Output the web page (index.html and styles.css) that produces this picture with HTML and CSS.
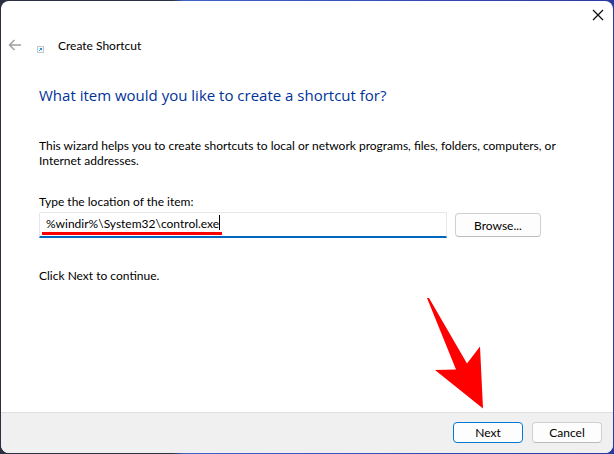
FILE: index.html
```html
<!DOCTYPE html>
<html lang="en">
<head>
    <meta charset="UTF-8">
    <meta name="viewport" content="width=device-width, initial-scale=1.0">
    <title>Create Shortcut</title>
    <link rel="stylesheet" href="styles.css">
</head>
<body>
    <form class="wizard">
        <div class="titlebar">
            <button type="button" class="close" aria-label="Close">
                <svg width="12" height="12" viewBox="0 0 12 12">
                    <path d="M1 1L11 11M11 1L1 11" fill="none" stroke="#111" stroke-width="1.3"/>
                </svg>
            </button>
        </div>

        <header class="header">
            <button type="button" class="back" aria-label="Back" disabled>
                <svg width="14" height="12" viewBox="0 0 14 12">
                    <path d="M6.5 1L1.5 6L6.5 11M1.5 6H13" fill="none" stroke="#a0a0a0" stroke-width="1.5"/>
                </svg>
            </button>
            <svg class="shortcut-icon" width="7" height="7" viewBox="0 0 7 7">
                <rect x="0.5" y="0.5" width="6" height="6" fill="#f6f9fb" stroke="#c3c8cd"/>
                <path d="M2 5L4.5 2.5" stroke="#2b9be6"/>
                <path d="M2.5 2H5V4.5Z" fill="#1588dd"/>
            </svg>
            <span class="header-title">Create Shortcut</span>
        </header>

        <main class="content">
            <h1>What item would you like to create a shortcut for?</h1>
            <p class="intro">This wizard helps you to create shortcuts to local or network programs, files, folders, computers, or Internet addresses.</p>

            <label for="location">Type the location of the item:</label>
            <div class="location-row">
                <div class="location-box">
                    <input type="text" id="location" name="location" value="%windir%\System32\control.exe">
                    <span class="caret"></span>
                    <span class="underline"></span>
                </div>
                <button type="button" class="btn browse">Browse...</button>
            </div>

            <p class="hint">Click Next to continue.</p>
        </main>

        <footer class="footer">
            <button type="submit" class="btn primary">Next</button>
            <button type="button" class="btn">Cancel</button>
            <svg class="arrow" width="57" height="111" viewBox="0 0 57 111">
                <path d="M0 0H2L40 65.5L53 48.5L56 110.5L8 72L29 71.5Z" fill="#ff0000"/>
            </svg>
        </footer>
    </form>
</body>
</html>
```

FILE: styles.css
```css
/* Desktop behind the window */
body {
    margin: 0;
    padding: 1px;
    font-family: Lato, "Segoe UI", sans-serif;
    font-size: 12px;
    line-height: 15px;
    color: #000;
    background: linear-gradient(to right, #2a3040 0%, #2a3040 28%, #3f62c8 30%, #2b3aa0 100%);
}

.wizard {
    display: flex;
    flex-direction: column;
    box-sizing: border-box;
    min-height: calc(100vh - 2px);
    margin: 0;
    border-radius: 8px;
    background-color: #fff;
    overflow: hidden;
}

button,
input {
    font: inherit;
    color: inherit;
}

svg {
    display: block;
}

/* Title bar */
.titlebar {
    display: flex;
    justify-content: flex-end;
    height: 28px;
}

.close,
.back {
    padding: 0;
    border: none;
    background: none;
}

.close {
    width: 30px;
}

.close svg {
    margin: 0 auto;
}

.header {
    display: flex;
    align-items: center;
    height: 32px;
    padding-left: 7px;
}

.shortcut-icon {
    margin: 8px 14px 0 15px;
}

/* Page content */
.content {
    flex: 1;
    padding: 24px 52px 24px 38px;
}

h1 {
    margin: 0 0 32px;
    font-family: "Open Sans", "Segoe UI", sans-serif;
    font-size: 15px;
    font-weight: normal;
    line-height: 21px;
    color: #003399;
}

.intro {
    margin: 0 0 26px;
}

label {
    display: block;
    margin-bottom: 3px;
}

.location-row {
    display: flex;
    align-items: center;
    gap: 8px;
    padding-right: 20px;
}

.location-box {
    position: relative;
    flex: 1;
}

input {
    display: block;
    box-sizing: border-box;
    width: 100%;
    height: 26px;
    padding: 0 6px 3px;
    border: 1px solid #e3e6ea;
    border-bottom: 2px solid #0067c0;
    border-radius: 2px 2px 0 0;
    background-color: #fff;
    outline: none;
}

.caret {
    position: absolute;
    top: 3px;
    left: 180px;
    width: 1px;
    height: 15px;
    background-color: #000;
}

.underline {
    position: absolute;
    top: 20px;
    left: 3px;
    width: 180px;
    height: 3px;
    background-color: #ff0000;
}

.hint {
    margin: 30px 0 0;
}

/* Buttons */
.btn {
    width: 70px;
    height: 21px;
    padding: 0;
    border: 1px solid #d0d0d0;
    border-bottom-color: #bcbcbc;
    border-radius: 4px;
    background-color: #fdfdfd;
}

.browse {
    width: 86px;
    height: 24px;
}

.primary {
    border-color: #0078d4;
}

.footer {
    position: relative;
    display: flex;
    justify-content: flex-end;
    gap: 9px;
    padding: 9px 11px 10px;
    border-top: 1px solid #dfdfdf;
    background-color: #f0f0f0;
}

/* Arrow pointing at the Next button */
.arrow {
    position: absolute;
    right: 129px;
    bottom: 44px;
}
```
